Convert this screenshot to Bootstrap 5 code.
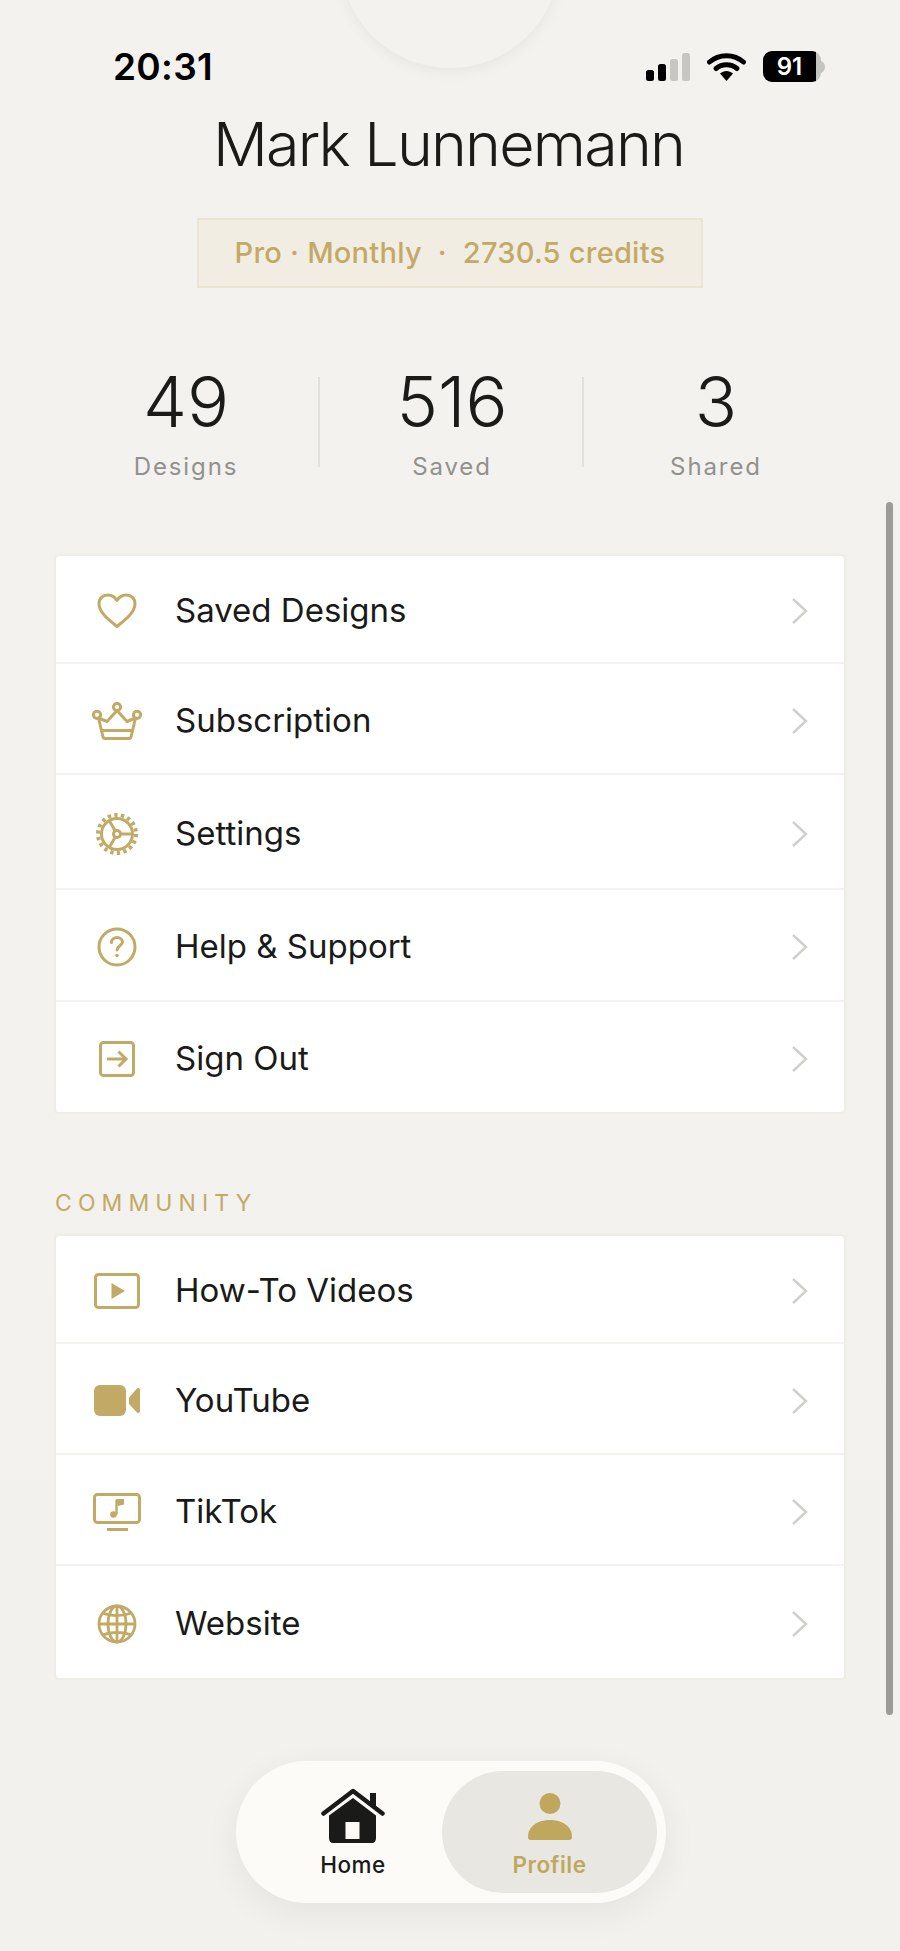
<!DOCTYPE html>
<html lang="en">
<head>
  <meta charset="UTF-8">
  <title>Profile</title>
  <link href="https://cdn.jsdelivr.net/npm/bootstrap@5.3.2/dist/css/bootstrap.min.css" rel="stylesheet">
  <script src="https://cdn.jsdelivr.net/npm/bootstrap@5.3.2/dist/js/bootstrap.bundle.min.js"></script>
  <style>
    body {
      background-color: #f4f2ee;
      font-family: Inter, "Liberation Sans", sans-serif;
      color: #1a1a18;
    }
    .screen {
      position: relative;
      width: 900px;
      height: 1951px;
      overflow: hidden;
      background: linear-gradient(#f4f2ee, #f2f1ed);
    }
    .avatar-circle {
      position: absolute;
      left: 340px;
      top: -152px;
      width: 220px;
      height: 220px;
      border-radius: 50%;
      background: #f4f2ee;
      box-shadow: 0 4px 14px rgba(0, 0, 0, 0.05);
    }
    .status-bar {
      position: relative;
      height: 110px;
      padding: 47px 75px 0 113px;
    }
    .status-time {
      font-size: 37px;
      font-weight: 600;
      line-height: 40px;
      color: #000;
      letter-spacing: 0.3px;
    }
    .status-icons {
      margin-top: 4px;
      gap: 17px;
    }
    .status-battery {
      width: 58px;
      height: 31px;
      border-radius: 9px;
      background: linear-gradient(90deg, #000 91%, #c4c4c0 91%);
      color: #fff;
      font-size: 24px;
      font-weight: 600;
      line-height: 31px;
      text-align: center;
      padding-right: 5px;
    }
    .profile-name {
      font-size: 61px;
      font-weight: 300;
      line-height: 68px;
      letter-spacing: -1.8px;
      margin: 0 3px 40px 0;
    }
    .plan-tag {
      width: 506px;
      height: 70px;
      line-height: 66px;
      background: #f2ede2;
      border: 2px solid #ebe4d2;
      color: #c2aa66;
      font-size: 29px;
      font-weight: 500;
      letter-spacing: 0.25px;
      white-space: pre;
    }
    .stats-row {
      margin-top: 89px;
      padding: 0 54px;
    }
    .stat-cell {
      width: 264px;
      height: 90px;
    }
    .stat-cell + .stat-cell {
      border-left: 2px solid #e2e0da;
    }
    .stat-box {
      width: 264px;
      text-align: center;
    }
    .stat-num {
      font-size: 70px;
      font-weight: 300;
      line-height: 66px;
      margin-top: -8px;
    }
    .stat-label {
      font-size: 24px;
      line-height: 30px;
      color: #91918d;
      letter-spacing: 1.9px;
      margin-top: 17px;
    }
    .menu-list {
      margin: 0 54px;
      border-radius: 4px;
      --bs-list-group-border-color: #f4f3ef;
      border: 2px solid #efede8;
    }
    .first-menu {
      margin-top: 87px;
    }
    .menu-row {
      display: flex;
      align-items: center;
      padding: 4px 0 0;
      height: 111px;
      font-size: 33px;
      color: #1a1a18;
      border-width: 0 0 2px;
    }
    .menu-row:first-child {
      height: 108px;
    }
    .first-menu .menu-row:nth-child(3) {
      height: 115px;
    }
    .first-menu .menu-row:nth-child(4) {
      height: 112px;
    }
    .first-menu .menu-row:last-child {
      height: 110px;
    }
    .second-menu .menu-row:last-child {
      height: 112px;
    }
    .menu-row:last-child {
      border-bottom: 0;
    }
    .menu-ico {
      width: 119px;
      flex: none;
      display: flex;
      justify-content: center;
      padding-left: 2px;
    }
    .menu-ico svg {
      display: block;
    }
    .menu-chevron {
      margin-left: auto;
      margin-right: 35px;
    }
    .section-title {
      margin: 74px 55px 0;
      height: 46px;
      color: #c2aa66;
      font-size: 23px;
      line-height: 30px;
      letter-spacing: 6.1px;
    }
    .scroll-thumb {
      position: absolute;
      left: 886px;
      top: 502px;
      width: 7px;
      height: 1213px;
      border-radius: 4px;
      background: #9b9b97;
    }
    .tab-pill {
      position: absolute;
      left: 236px;
      top: 1761px;
      width: 430px;
      height: 142px;
      border-radius: 71px;
      background: #fcfbf7;
      box-shadow: 0 10px 36px rgba(0, 0, 0, 0.06);
      padding: 10px 9px 10px 0;
    }
    .tab-item {
      height: 122px;
      text-align: center;
      font-size: 22.5px;
      font-weight: 500;
      line-height: 28px;
      letter-spacing: 0.5px;
    }
    .tab-home {
      width: 206px;
      padding: 17px 0 0 28px;
    }
    .tab-profile {
      width: 215px;
      padding-top: 22px;
      border-radius: 61px;
      background: #e9e7e2;
      color: #c0a75e;
      font-weight: 600;
    }
    .tab-item svg {
      display: block;
      margin: 0 auto 8px;
    }
    .tab-profile svg {
      margin-bottom: 11px;
    }
  </style>
</head>
<body>
  <div class="screen">
    <div class="avatar-circle"></div>

    <div class="status-bar d-flex justify-content-between align-items-start">
      <div class="status-time">20:31</div>
      <div class="status-icons d-flex align-items-center">
        <svg width="44" height="28" viewBox="0 0 44 28">
          <rect x="0" y="17" width="8" height="11" rx="2.500" fill="#000"/>
          <rect x="12" y="11" width="8" height="17" rx="2.500" fill="#000"/>
          <rect x="24" y="6" width="8" height="22" rx="2.500" fill="#c6c6c2"/>
          <rect x="36" y="0" width="8" height="28" rx="2.500" fill="#c6c6c2"/>
        </svg>
        <svg width="39" height="28" viewBox="0 0 39 28">
          <path d="M2.500 9C12 0.500 27 0.500 36.500 9" fill="none" stroke="#000" stroke-width="5" stroke-linecap="round"/>
          <path d="M9 15.500C15 10.500 24 10.500 30 15.500" fill="none" stroke="#000" stroke-width="5" stroke-linecap="round"/>
          <path d="M13 20.500C17 17 22 17 26 20.500L19.500 28Z" fill="#000"/>
        </svg>
        <div class="d-flex align-items-center">
          <div class="status-battery">91</div>
          <svg width="4" height="12" viewBox="0 0 4 12"><path d="M0 0C3 1 4 4 4 6C4 8 3 11 0 12Z" fill="#c4c4c0"/></svg>
        </div>
      </div>
    </div>

    <h1 class="profile-name text-center">Mark Lunnemann</h1>
    <div class="plan-tag mx-auto text-center">Pro · Monthly  ·  2730.5 credits</div>

    <div class="stats-row d-flex">
      <div class="stat-cell"><div class="stat-box"><div class="stat-num">49</div><div class="stat-label">Designs</div></div></div>
      <div class="stat-cell"><div class="stat-box"><div class="stat-num">516</div><div class="stat-label">Saved</div></div></div>
      <div class="stat-cell"><div class="stat-box"><div class="stat-num">3</div><div class="stat-label">Shared</div></div></div>
    </div>

    <div class="list-group menu-list first-menu">
      <a class="list-group-item menu-row" href="#">
        <span class="menu-ico"><svg width="40" height="36" viewBox="0 0 40 36" fill="none" stroke="#c2aa66" stroke-width="3" stroke-linejoin="round"><path d="M20 33.500C12 27 2 19.500 2 10.800C2 5.500 6 2 10.500 2C14.500 2 18 4 20 7.500C22 4 25.500 2 29.500 2C34 2 38 5.500 38 10.800C38 19.500 28 27 20 33.500Z"/></svg></span>
        Saved Designs
        <svg class="menu-chevron" width="18" height="28" viewBox="0 0 18 28" fill="none" stroke="#cfcfcb" stroke-width="2.400"><path d="M2 2L15 14L2 26"/></svg>
      </a>
      <a class="list-group-item menu-row" href="#">
        <span class="menu-ico"><svg width="50" height="38" viewBox="0 0 50 38" fill="none" stroke="#c2aa66" stroke-width="3" stroke-linejoin="round" stroke-linecap="round"><circle cx="25" cy="5" r="3.600"/><circle cx="5" cy="12.800" r="3.600"/><circle cx="45" cy="12.800" r="3.600"/><path d="M25 8.500L15 19.500L6.500 16L11 35C11.300 36 12 36.500 13 36.500H37C38 36.500 38.700 36 39 35L43.500 16L35 19.500L25 8.500Z"/><path d="M10 28.500H40"/></svg></span>
        Subscription
        <svg class="menu-chevron" width="18" height="28" viewBox="0 0 18 28" fill="none" stroke="#cfcfcb" stroke-width="2.400"><path d="M2 2L15 14L2 26"/></svg>
      </a>
      <a class="list-group-item menu-row" href="#">
        <span class="menu-ico"><svg width="42" height="42" viewBox="0 0 42 42" fill="none" stroke="#c2aa66" stroke-width="3"><circle cx="21" cy="21" r="15.500"/><circle cx="21" cy="21" r="19" stroke-width="4" stroke-dasharray="3.300 3.332"/><circle cx="21" cy="21" r="3.500"/><path d="M24.500 21H36M19.300 18L13.500 8M19.300 24L13.500 34"/></svg></span>
        Settings
        <svg class="menu-chevron" width="18" height="28" viewBox="0 0 18 28" fill="none" stroke="#cfcfcb" stroke-width="2.400"><path d="M2 2L15 14L2 26"/></svg>
      </a>
      <a class="list-group-item menu-row" href="#">
        <span class="menu-ico"><svg width="40" height="40" viewBox="0 0 40 40" fill="none" stroke="#c2aa66" stroke-width="3" stroke-linecap="round"><circle cx="20" cy="20" r="18"/><path d="M14.500 15.500C14.500 12.500 17 10.500 20 10.500C23 10.500 25.500 12.500 25.500 15C25.500 18.500 20 19 20 23"/><circle cx="20" cy="28.500" r="1.800" fill="#c2aa66" stroke="none"/></svg></span>
        Help &amp; Support
        <svg class="menu-chevron" width="18" height="28" viewBox="0 0 18 28" fill="none" stroke="#cfcfcb" stroke-width="2.400"><path d="M2 2L15 14L2 26"/></svg>
      </a>
      <a class="list-group-item menu-row" href="#">
        <span class="menu-ico"><svg width="36" height="36" viewBox="0 0 36 36" fill="none" stroke="#c2aa66" stroke-width="3"><rect x="1.500" y="1.500" width="33" height="33" rx="3"/><path d="M8 18H27M19.500 10.500L27 18L19.500 25.500"/></svg></span>
        Sign Out
        <svg class="menu-chevron" width="18" height="28" viewBox="0 0 18 28" fill="none" stroke="#cfcfcb" stroke-width="2.400"><path d="M2 2L15 14L2 26"/></svg>
      </a>
    </div>

    <div class="section-title">COMMUNITY</div>

    <div class="list-group menu-list second-menu">
      <a class="list-group-item menu-row" href="#">
        <span class="menu-ico"><svg width="46" height="36" viewBox="0 0 46 36" fill="none" stroke="#c2aa66" stroke-width="3"><rect x="1.500" y="1.500" width="43" height="33" rx="3"/><path d="M17.500 10V26L31 18Z" fill="#c2aa66" stroke="none"/></svg></span>
        How-To Videos
        <svg class="menu-chevron" width="18" height="28" viewBox="0 0 18 28" fill="none" stroke="#cfcfcb" stroke-width="2.400"><path d="M2 2L15 14L2 26"/></svg>
      </a>
      <a class="list-group-item menu-row" href="#">
        <span class="menu-ico"><svg width="46" height="31" viewBox="0 0 46 31" fill="#c2aa66"><rect x="0" y="0" width="32" height="31" rx="6"/><path d="M35 12.500L43 3.500C44.500 2.500 46 3.500 46 5V26C46 27.500 44.500 28.500 43 27.500L35 19Z"/></svg></span>
        YouTube
        <svg class="menu-chevron" width="18" height="28" viewBox="0 0 18 28" fill="none" stroke="#cfcfcb" stroke-width="2.400"><path d="M2 2L15 14L2 26"/></svg>
      </a>
      <a class="list-group-item menu-row" href="#">
        <span class="menu-ico"><svg width="48" height="38" viewBox="0 0 48 38" fill="none" stroke="#c2aa66" stroke-width="3"><rect x="1.500" y="1.500" width="45" height="28" rx="3"/><path d="M14 36.500H35"/><path d="M23.500 21.500V7" stroke-width="2.400"/><path d="M23 6H31V11.500L25 13Z" fill="#c2aa66" stroke="none"/><circle cx="20.500" cy="21.500" r="3.300" fill="#c2aa66" stroke="none"/></svg></span>
        TikTok
        <svg class="menu-chevron" width="18" height="28" viewBox="0 0 18 28" fill="none" stroke="#cfcfcb" stroke-width="2.400"><path d="M2 2L15 14L2 26"/></svg>
      </a>
      <a class="list-group-item menu-row" href="#">
        <span class="menu-ico"><svg width="40" height="40" viewBox="0 0 40 40" fill="none" stroke="#c2aa66" stroke-width="2.800"><circle cx="20" cy="20" r="18"/><ellipse cx="20" cy="20" rx="9" ry="18"/><path d="M20 2V38M2 20H38M6 9C14 12.500 26 12.500 34 9M6 31C14 27.500 26 27.500 34 31"/></svg></span>
        Website
        <svg class="menu-chevron" width="18" height="28" viewBox="0 0 18 28" fill="none" stroke="#cfcfcb" stroke-width="2.400"><path d="M2 2L15 14L2 26"/></svg>
      </a>
    </div>

    <div class="scroll-thumb"></div>

    <div class="tab-pill d-flex">
      <div class="tab-item tab-home">
        <svg width="64" height="55" viewBox="0 0 64 55"><path d="M49 5H55V18H49Z" fill="#1a1a18"/><path d="M2.500 25.500L32 3L61.500 25.500" fill="none" stroke="#1a1a18" stroke-width="4.500" stroke-linecap="round" stroke-linejoin="round"/><path d="M32 10L55 27.500V50C55 53 53.500 55 51 55H12C9.500 55 8 53 8 50V27.500Z" fill="#1a1a18"/><rect x="24.500" y="34" width="14" height="17" fill="#fcfbf7"/></svg>
        Home
      </div>
      <div class="tab-item tab-profile">
        <svg width="44" height="47" viewBox="0 0 44 47" fill="#c0a75e"><circle cx="22" cy="10.500" r="10.500"/><path d="M0 44C0 33 10 27 22 27C34 27 44 33 44 44C44 46 43 47 41 47H3C1 47 0 46 0 44Z"/></svg>
        Profile
      </div>
    </div>
  </div>
</body>
</html>
